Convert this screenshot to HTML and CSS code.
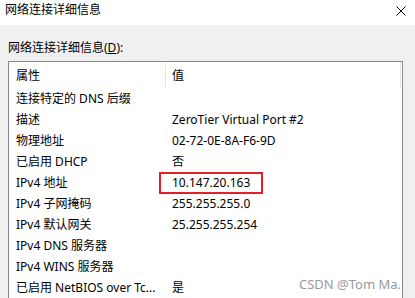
FILE: index.html
```html
<!DOCTYPE html>
<html lang="zh-CN">
<head>
  <meta charset="UTF-8">
  <title>网络连接详细信息</title>
  <link rel="stylesheet" href="styles.css">
</head>
<body>
  <div class="dlg">
    <!-- Title bar -->
    <div class="dlg-title">
      <span>网络连接详细信息</span>
      <svg class="dlg-close" width="10" height="10" viewBox="0 0 10 10">
        <path d="M0.5 0.5 L9.5 9.5 M9.5 0.5 L0.5 9.5" stroke="#000" stroke-width="1" fill="none"/>
      </svg>
    </div>

    <div class="dlg-body">
      <div class="dlg-label">网络连接详细信息(<u>D</u>):</div>

      <div class="list">
        <div class="list-head">
          <div class="col-prop">属性</div>
          <div class="col-val">值</div>
        </div>
        <div class="list-row"><div class="col-prop">连接特定的 DNS 后缀</div><div class="col-val"></div></div>
        <div class="list-row"><div class="col-prop">描述</div><div class="col-val">ZeroTier Virtual Port #2</div></div>
        <div class="list-row"><div class="col-prop">物理地址</div><div class="col-val">02-72-0E-8A-F6-9D</div></div>
        <div class="list-row"><div class="col-prop">已启用 DHCP</div><div class="col-val">否</div></div>
        <div class="list-row marked"><div class="col-prop">IPv4 地址</div><div class="col-val">10.147.20.163</div><span class="mark"></span></div>
        <div class="list-row"><div class="col-prop">IPv4 子网掩码</div><div class="col-val">255.255.255.0</div></div>
        <div class="list-row"><div class="col-prop">IPv4 默认网关</div><div class="col-val">25.255.255.254</div></div>
        <div class="list-row"><div class="col-prop">IPv4 DNS 服务器</div><div class="col-val"></div></div>
        <div class="list-row"><div class="col-prop">IPv4 WINS 服务器</div><div class="col-val"></div></div>
        <div class="list-row"><div class="col-prop">已启用 NetBIOS over Tc...</div><div class="col-val">是</div></div>
      </div>
    </div>

    <div class="watermark">CSDN @Tom Ma.</div>
  </div>
</body>
</html>
```

FILE: styles.css
```css
* {
  margin: 0;
  padding: 0;
  box-sizing: border-box;
}

body {
  width: 415px;
  height: 298px;
  overflow: hidden;
  font-family: "Noto Sans", "Noto Sans CJK SC", sans-serif;
  font-size: 12px;
  color: #000;
  background: #f0f0f0;
}

.dlg {
  position: relative;
  height: 298px;
  overflow: hidden;
}

.dlg-title {
  height: 25px;
  background: #fff;
  display: flex;
  align-items: center;
  justify-content: space-between;
  padding: 0 9px 5px 5px;
  line-height: 16px;
}

.dlg-close {
  display: block;
  margin-top: 1px;
}

.dlg-body {
  padding: 15px 12px 0 8px;
}

.dlg-label {
  line-height: 16px;
  margin-bottom: 5px;
}

.dlg-label u {
  text-decoration: underline;
}

.list {
  background: #fff;
  border: 1px solid #828790;
  border-bottom: 0;
  height: 237px;
  overflow: hidden;
}

.list-head,
.list-row {
  position: relative;
  display: flex;
  height: 21px;
  line-height: 21px;
  white-space: nowrap;
}

.list-head {
  height: 25px;
  line-height: 25px;
  margin-top: 1px;
}

.col-prop {
  width: 157px;
  padding-left: 7px;
  overflow: hidden;
}

.col-val {
  flex: 1;
  padding-left: 6px;
}

.list-head .col-prop {
  border-right: 1px solid #e5e5e5;
}

.list-head .col-val {
  border-right: 1px solid #e5e5e5;
  margin-right: 1px;
}

.mark {
  position: absolute;
  left: 150px;
  top: 0;
  width: 104px;
  height: 22px;
  border: 2px solid #e0202a;
}

.watermark {
  position: absolute;
  right: 14px;
  bottom: 6px;
  font-size: 13px;
  line-height: 16px;
  color: #9a9a9a;
}
```
